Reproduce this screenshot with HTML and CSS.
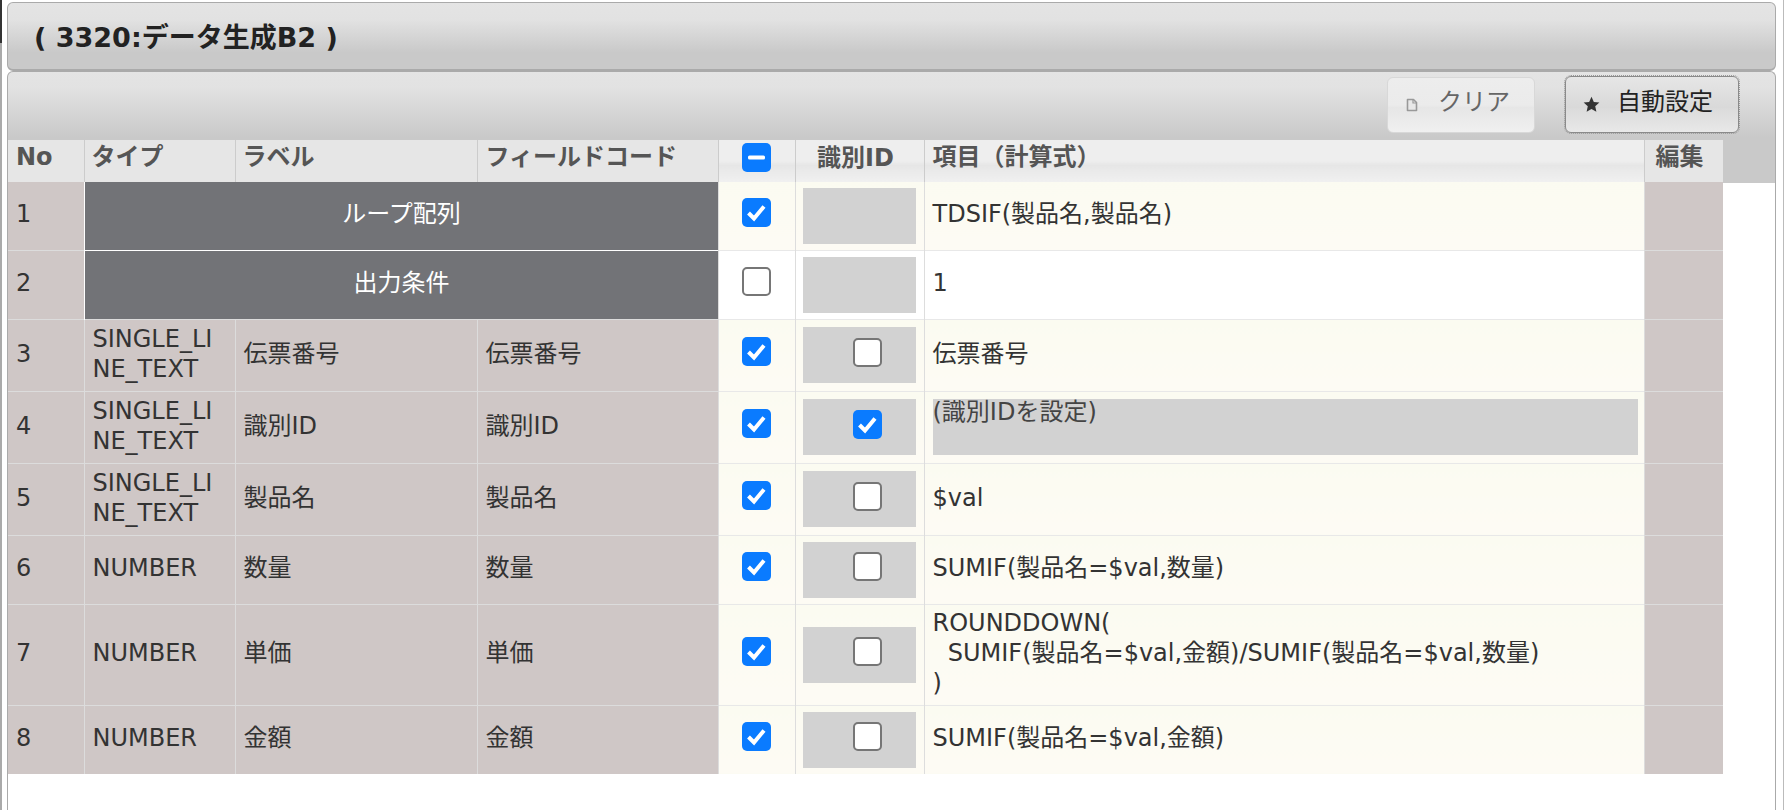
FILE: index.html
```
<!DOCTYPE html>
<html lang="ja">
<head>
<meta charset="utf-8">
<title>3320:データ生成B2</title>
<link rel="stylesheet" href="styles.css">
</head>
<body>
<div class="edge-left"></div>
<div class="edge-right"></div>
<header class="title-bar"><h1 class="title">( 3320:データ生成B2 )</h1></header>
<main class="panel">
  <div class="toolbar">
    <button class="btn btn-clear" type="button">
      <svg class="btn-icon" viewBox="0 0 12 14" width="12" height="14"><path d="M1.5 1.5h6l3 3v8h-9z" fill="#e8e8e8" stroke="#999" stroke-width="1.6" stroke-linejoin="round"/><path d="M7 1.5v3.5h3.5" fill="none" stroke="#999" stroke-width="1.2"/></svg>
      <span class="btn-label">クリア</span>
    </button>
    <button class="btn btn-auto" type="button">
      <svg class="btn-icon" viewBox="0 0 16 16" width="17" height="17"><path d="M8 .8l2.2 4.8 5.2.6-3.9 3.5 1.1 5.2L8 12.3l-4.6 2.6 1.1-5.2L.6 6.2l5.2-.6z" fill="#333"/></svg>
      <span class="btn-label">自動設定</span>
    </button>
  </div>
  <table class="grid">
    <colgroup>
      <col class="c-no"><col class="c-type"><col class="c-label"><col class="c-code"><col class="c-chk"><col class="c-id"><col class="c-expr"><col class="c-edit">
    </colgroup>
    <thead>
      <tr>
        <th class="th-no">No</th><th>タイプ</th><th>ラベル</th><th class="th-code">フィールドコード</th>
        <th class="th-soft th-center th-check"><span class="cb cb-on cb-head"><svg viewBox="0 0 29 29"><rect x="6" y="12.5" width="17" height="4" rx="1.5" fill="#fff"/></svg></span></th>
        <th class="th-soft th-center th-id">識別ID</th>
        <th class="th-soft th-code">項目（計算式）</th>
        <th class="th-edit">編集</th>
      </tr>
    </thead>
    <tbody>
      <tr class="r1">
        <td class="no">1</td><td class="dark" colspan="3">ループ配列</td>
        <td class="chk"><span class="cb cb-on"><svg viewBox="0 0 29 29"><path d="M6.5 15l5.5 5.5L22 8.5" fill="none" stroke="#fff" stroke-width="4"/></svg></span></td>
        <td class="idc"><div class="idbox"></div></td>
        <td class="expr">TDSIF(製品名,製品名)</td><td class="edit"></td>
      </tr>
      <tr class="r2 plain">
        <td class="no">2</td><td class="dark" colspan="3">出力条件</td>
        <td class="chk"><span class="cb"></span></td>
        <td class="idc"><div class="idbox"></div></td>
        <td class="expr">1</td><td class="edit"></td>
      </tr>
      <tr class="r3">
        <td class="no">3</td><td class="type">SINGLE_LINE_TEXT</td><td class="meta">伝票番号</td><td class="meta">伝票番号</td>
        <td class="chk"><span class="cb cb-on"><svg viewBox="0 0 29 29"><path d="M6.5 15l5.5 5.5L22 8.5" fill="none" stroke="#fff" stroke-width="4"/></svg></span></td>
        <td class="idc"><div class="idbox"><span class="cb"></span></div></td>
        <td class="expr">伝票番号</td><td class="edit"></td>
      </tr>
      <tr class="r3">
        <td class="no">4</td><td class="type">SINGLE_LINE_TEXT</td><td class="meta">識別ID</td><td class="meta">識別ID</td>
        <td class="chk"><span class="cb cb-on"><svg viewBox="0 0 29 29"><path d="M6.5 15l5.5 5.5L22 8.5" fill="none" stroke="#fff" stroke-width="4"/></svg></span></td>
        <td class="idc"><div class="idbox"><span class="cb cb-on"><svg viewBox="0 0 29 29"><path d="M6.5 15l5.5 5.5L22 8.5" fill="none" stroke="#fff" stroke-width="4"/></svg></span></div></td>
        <td class="expr expr-top"><div class="expr-off">(識別IDを設定)</div></td><td class="edit"></td>
      </tr>
      <tr class="r3">
        <td class="no">5</td><td class="type">SINGLE_LINE_TEXT</td><td class="meta">製品名</td><td class="meta">製品名</td>
        <td class="chk"><span class="cb cb-on"><svg viewBox="0 0 29 29"><path d="M6.5 15l5.5 5.5L22 8.5" fill="none" stroke="#fff" stroke-width="4"/></svg></span></td>
        <td class="idc"><div class="idbox"><span class="cb"></span></div></td>
        <td class="expr">$val</td><td class="edit"></td>
      </tr>
      <tr class="r2">
        <td class="no">6</td><td class="type">NUMBER</td><td class="meta">数量</td><td class="meta">数量</td>
        <td class="chk"><span class="cb cb-on"><svg viewBox="0 0 29 29"><path d="M6.5 15l5.5 5.5L22 8.5" fill="none" stroke="#fff" stroke-width="4"/></svg></span></td>
        <td class="idc"><div class="idbox"><span class="cb"></span></div></td>
        <td class="expr">SUMIF(製品名=$val,数量)</td><td class="edit"></td>
      </tr>
      <tr class="r7">
        <td class="no">7</td><td class="type">NUMBER</td><td class="meta">単価</td><td class="meta">単価</td>
        <td class="chk"><span class="cb cb-on"><svg viewBox="0 0 29 29"><path d="M6.5 15l5.5 5.5L22 8.5" fill="none" stroke="#fff" stroke-width="4"/></svg></span></td>
        <td class="idc"><div class="idbox"><span class="cb"></span></div></td>
        <td class="expr"><div class="pre">ROUNDDOWN(
  SUMIF(製品名=$val,金額)/SUMIF(製品名=$val,数量)
)</div></td><td class="edit"></td>
      </tr>
      <tr class="r2">
        <td class="no">8</td><td class="type">NUMBER</td><td class="meta">金額</td><td class="meta">金額</td>
        <td class="chk"><span class="cb cb-on"><svg viewBox="0 0 29 29"><path d="M6.5 15l5.5 5.5L22 8.5" fill="none" stroke="#fff" stroke-width="4"/></svg></span></td>
        <td class="idc"><div class="idbox"><span class="cb"></span></div></td>
        <td class="expr">SUMIF(製品名=$val,金額)</td><td class="edit"></td>
      </tr>
    </tbody>
  </table>
</main>
</body>
</html>
```
FILE: styles.css
```
* { box-sizing: border-box; }
html, body { height: 100%; }
body {
  margin: 0;
  padding: 2px 8px 0 7px;
  height: 810px;
  overflow: hidden;
  background: #fff;
  font-family: "DejaVu Sans", "Noto Sans CJK JP", sans-serif;
  font-size: 24px;
  color: #333;
}
.edge-left {
  position: absolute;
  left: 0;
  top: 0;
  width: 2px;
  height: 810px;
  background: linear-gradient(#333 43px, #aaa 43px);
}
.edge-right {
  position: absolute;
  right: 0;
  top: 0;
  width: 1px;
  height: 810px;
  background: #bbb;
}
.title-bar {
  height: 69px;
  border: 1px solid #aaa;
  border-bottom-width: 2px;
  border-radius: 6px;
  background: linear-gradient(#e4e4e4 0, #e2e2e2 25%, #c9c9c9 75%, #c9c9c9 100%);
  display: flex;
  align-items: center;
  padding: 3px 0 0 26px;
}
.title {
  margin: 0;
  font-size: 27px;
  font-weight: 700;
  color: #222;
  line-height: 1;
}
.panel {
  height: 739px;
  border: 1px solid #aaa;
  border-bottom: none;
  border-radius: 6px 6px 0 0;
  background: linear-gradient(#e4e4e4 0, #e2e2e2 16px, #c9c9c9 66px, #c9c9c9 111px, #fff 111px);
}
.toolbar {
  height: 68px;
  display: flex;
  justify-content: flex-end;
  gap: 30px;
  padding: 4px 36px 0 0;
}
.btn {
  height: 57px;
  border: 1px solid #ccc;
  border-radius: 6px;
  font: inherit;
  color: #666;
  display: flex;
  align-items: center;
  padding: 0 0 6px 0;
}
.btn-clear {
  width: 148px;
  padding-left: 18px;
  gap: 20px;
  border-color: #d8d8d8;
  margin-top: 1px;
  height: 56px;
  background: linear-gradient(#ededed, #ebebeb 50%, #e6e6e6 55%, #f0f0f0);
}
.btn-auto {
  width: 174px;
  padding-left: 17px;
  gap: 17px;
  border: 1px solid #8a8a8a;
  outline: 1px dotted #999;
  color: #222;
  background: linear-gradient(#e6e6e6, #d9d9d9 55%, #dcdcdc 60%, #e8e8e8);
}
.btn-icon { margin-top: 6px; flex: none; }
.btn-label { line-height: 1; }
.grid {
  border-collapse: collapse;
  table-layout: fixed;
  width: 1715px;
}
.c-no { width: 76px; }
.c-type { width: 151px; }
.c-label { width: 242px; }
.c-code { width: 241px; }
.c-chk { width: 77px; }
.c-id { width: 129px; }
.c-expr { width: 720px; }
.c-edit { width: 79px; }
.grid th {
  height: 42px;
  padding: 0 7px 8px;
  background: #e6e6e6;
  border-left: 1px solid #ccc;
  color: #555;
  font-size: 24px;
  font-weight: 700;
  line-height: 30px;
  text-align: left;
  vertical-align: middle;
}
.grid th:first-child { border-left: none; }
.grid th.th-no, .grid th.th-code { padding-left: 8px; }
.grid th.th-edit { padding-left: 11px; }
.grid th.th-soft { background: linear-gradient(#eee 0, #eee 50%, #e6e6e6 60%, #f0f0f0 100%); }
.grid th.th-center { text-align: center; }
.grid th.th-check { padding: 0 0 8px; }
.grid th.th-id { padding: 0 8px 6px 0; }
.grid td {
  padding: 0 7px 3px 8px;
  border-top: 1px solid #e8e8e8;
  border-left: 1px solid #ddd;
  background: linear-gradient(#fbfbf1, #fdfbf4);
  vertical-align: middle;
  line-height: 30px;
}
.grid tbody tr:first-child td { border-top: none; }
.grid td:first-child { border-left: none; }
.r1 td { height: 68px; }
.r2 td { height: 69px; }
.r3 td { height: 72px; }
.r7 td { height: 101px; }
.grid td.no, .grid td.type, .grid td.meta, .grid td.edit { background: #cfc7c6; border-color: #dcdcdc; }
.grid td.dark { background: #727377; color: #fff; text-align: center; border-color: #fff; }
.grid .plain td.chk, .grid .plain td.idc, .grid .plain td.expr { background: #fff; }
.type { word-break: break-all; }
.grid td.chk { padding: 0 0 8px; text-align: center; }
.grid td.idc { padding: 0 7px; }
.grid td.expr-top { padding-bottom: 0; }
.idbox {
  height: 56px;
  width: 113px;
  background: #d2d2d2;
  display: flex;
  align-items: center;
  justify-content: center;
  padding: 0 0 6px 16px;
}
.cb {
  display: inline-block;
  width: 29px;
  height: 29px;
  border: 2px solid #767676;
  border-radius: 5px;
  background: #fff;
  vertical-align: middle;
}
.cb svg { display: block; width: 100%; height: 100%; }
.cb-on { border: none; background: #0a7bff; }
.expr-off { height: 56px; background: #d2d2d2; color: #444; width: 705px; line-height: 26px; }
.pre { white-space: pre-wrap; }
```
